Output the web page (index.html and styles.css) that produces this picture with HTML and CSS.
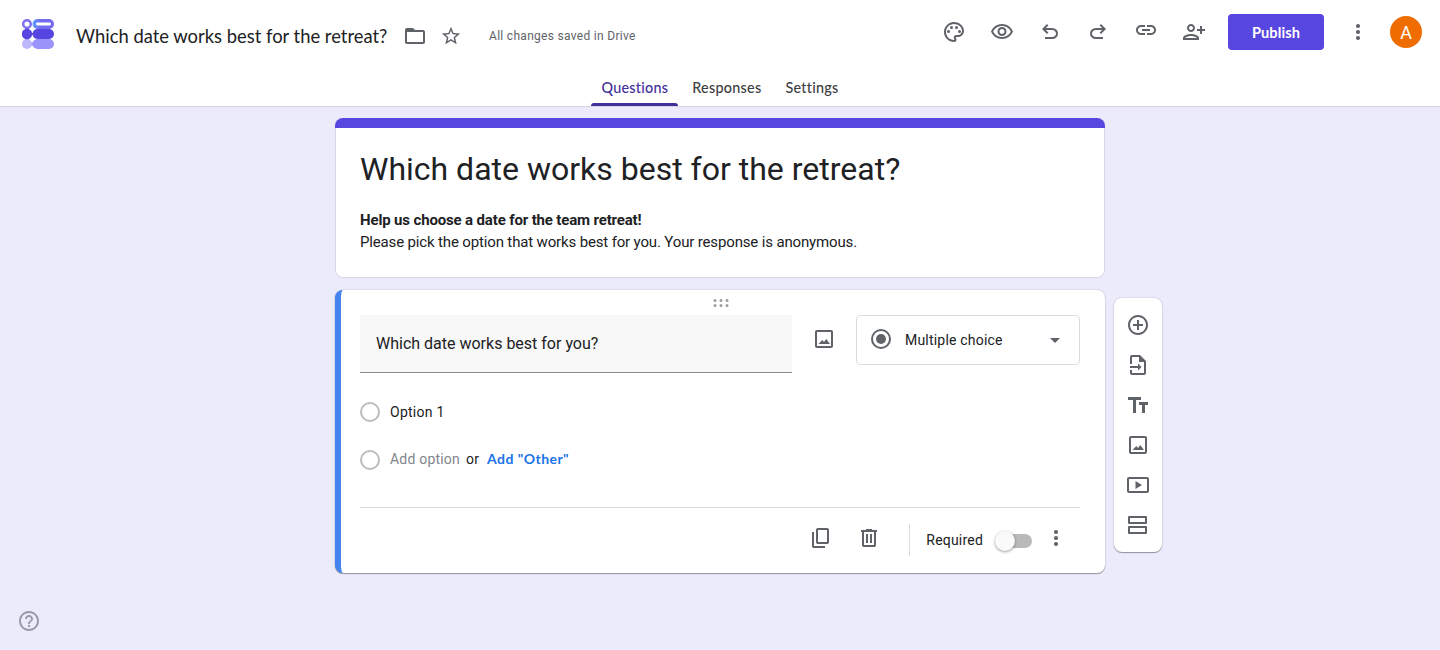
FILE: index.html
```html
<!DOCTYPE html>
<html lang="en">
<head>
    <meta charset="UTF-8">
    <meta name="viewport" content="width=device-width, initial-scale=1.0">
    <title>Which date works best for the retreat?</title>
    <link rel="stylesheet" href="styles.css">
</head>
<body>
    <header class="header">
        <div class="top-bar">
            <div class="top-left">
                <svg class="logo" width="32" height="30" viewBox="0 0 32 30">
                    <defs>
                        <linearGradient id="pill" x1="0" x2="1">
                            <stop offset="0" stop-color="#5ba4fa"/>
                            <stop offset=".35" stop-color="#756cf0"/>
                            <stop offset="1" stop-color="#7468ee"/>
                        </linearGradient>
                    </defs>
                    <path d="M3 9h4v12H3zM9 14h4v2H9z" fill="#6c5fe8"/>
                    <rect x="10.5" y="0" width="21.5" height="10" rx="5" fill="url(#pill)"/>
                    <rect x="14" y="3.6" width="15" height="2.8" rx="1.4" fill="#fff"/>
                    <circle cx="5" cy="5" r="3.8" fill="#fff" stroke="#7b70ee" stroke-width="2.5"/>
                    <path d="M8 23h5v4H8z" fill="#b5aefc"/>
                    <circle cx="5" cy="25" r="5" fill="#bcb6fd"/>
                    <rect x="10.5" y="20" width="21.5" height="10" rx="5" fill="#9a93fa"/>
                    <circle cx="5" cy="15" r="5.2" fill="#5645e0"/>
                    <rect x="10.5" y="10" width="21.5" height="10" rx="5" fill="#5645e0"/>
                </svg>
                <span class="doc-title">Which date works best for the retreat?</span>
                <svg class="icon folder" viewBox="0 0 24 24"><path d="M20 6h-8l-2-2H4c-1.100 0-2 .9-2 2v12c0 1.100.9 2 2 2h16c1.100 0 2-.9 2-2V8c0-1.100-.9-2-2-2zm0 12H4V8h16v10z"/></svg>
                <svg class="icon star" viewBox="0 0 24 24"><path d="M22 9.240l-7.190-.62L12 2 9.190 8.630 2 9.240l5.460 4.730L5.820 21 12 17.270 18.180 21l-1.630-7.030L22 9.240zM12 15.400l-3.760 2.270 1-4.280-3.320-2.880 4.380-.38L12 6.100l1.710 4.040 4.380.38-3.320 2.880 1 4.280L12 15.400z"/></svg>
                <span class="save-status">All changes saved in Drive</span>
            </div>
            <div class="top-right">
                <svg class="icon" viewBox="0 0 24 24"><path d="M12 22C6.490 22 2 17.510 2 12S6.490 2 12 2s10 4.040 10 9c0 3.310-2.690 6-6 6h-1.770c-.28 0-.5.22-.5.5 0 .12.05.23.13.33.41.47.64 1.060.64 1.670A2.500 2.500 0 0 1 12 22zm0-18c-4.410 0-8 3.590-8 8s3.590 8 8 8c.28 0 .5-.22.5-.5a.54.54 0 0 0-.14-.35c-.41-.46-.63-1.050-.63-1.650a2.500 2.500 0 0 1 2.500-2.500H16c2.210 0 4-1.790 4-4 0-3.860-3.590-7-8-7z"/><circle cx="6.500" cy="11.500" r="1.500"/><circle cx="9.500" cy="7.500" r="1.500"/><circle cx="14.500" cy="7.500" r="1.500"/><circle cx="17.500" cy="11.500" r="1.500"/></svg>
                <svg class="icon" viewBox="0 0 24 24"><path d="M12 6c3.790 0 7.170 2.130 8.820 5.500C19.170 14.870 15.790 17 12 17s-7.170-2.130-8.820-5.500C4.830 8.130 8.210 6 12 6m0-2C7 4 2.730 7.110 1 11.500 2.730 15.890 7 19 12 19s9.270-3.110 11-7.500C21.270 7.110 17 4 12 4zm0 5c1.380 0 2.500 1.120 2.500 2.500S13.380 14 12 14s-2.500-1.120-2.500-2.500S10.620 9 12 9m0-2c-2.480 0-4.500 2.020-4.500 4.500S9.520 16 12 16s4.500-2.020 4.500-4.500S14.480 7 12 7z"/></svg>
                <svg class="icon" viewBox="0 0 24 24"><path d="M7 19v-2h7.100q1.575 0 2.737-1Q18 15 18 13.500T16.837 11Q15.675 10 14.100 10H7.800l2.600 2.600L9 14 4 9l5-5 1.400 1.400L7.800 8h6.300q2.425 0 4.163 1.575Q20 11.150 20 13.500t-1.737 3.925Q16.525 19 14.100 19Z"/></svg>
                <svg class="icon" viewBox="0 0 24 24"><path d="M9.900 19q-2.425 0-4.162-1.575Q4 15.850 4 13.500t1.738-3.925Q7.475 8 9.900 8h6.300l-2.600-2.600L15 4l5 5-5 5-1.400-1.400 2.600-2.600H9.900q-1.575 0-2.737 1Q6 12 6 13.500T7.163 16Q8.325 17 9.900 17H17v2Z"/></svg>
                <svg class="icon" viewBox="0 2 24 24"><path d="M3.900 12c0-1.710 1.390-3.100 3.100-3.100h4V7H7c-2.760 0-5 2.240-5 5s2.240 5 5 5h4v-1.900H7c-1.710 0-3.100-1.390-3.100-3.100zM8 13h8v-2H8v2zm9-6h-4v1.900h4c1.710 0 3.100 1.390 3.100 3.100s-1.390 3.100-3.100 3.100h-4V17h4c2.760 0 5-2.240 5-5s-2.240-5-5-5z"/></svg>
                <svg class="icon" viewBox="0 0 24 24"><path d="M20 9V6h-2v3h-3v2h3v3h2v-3h3V9h-3zM9 12c2.210 0 4-1.790 4-4s-1.790-4-4-4-4 1.790-4 4 1.790 4 4 4zm0-6c1.100 0 2 .9 2 2s-.9 2-2 2-2-.9-2-2 .9-2 2-2zm0 8c-2.670 0-8 1.340-8 4v2h16v-2c0-2.660-5.330-4-8-4zm6 4H3v-.01C3.200 17.290 6.300 16 9 16s5.800 1.290 6 1.990V18z"/></svg>
                <button class="publish-btn">Publish</button>
                <svg class="icon more" viewBox="0 0 24 24"><circle cx="12" cy="6" r="2.100"/><circle cx="12" cy="12" r="2.100"/><circle cx="12" cy="18" r="2.100"/></svg>
                <div class="avatar">A</div>
            </div>
        </div>
        <nav class="tabs">
            <a class="tab active">Questions</a>
            <a class="tab">Responses</a>
            <a class="tab">Settings</a>
        </nav>
    </header>

    <main class="editor">
        <section class="card title-card">
            <h1>Which date works best for the retreat?</h1>
            <p class="lead">Help us choose a date for the team retreat!</p>
            <p class="desc">Please pick the option that works best for you. Your response is anonymous.</p>
        </section>

        <section class="card question-card">
            <div class="drag">
                <svg width="16" height="8" viewBox="0 0 16 8"><circle cx="2" cy="1.500" r="1.500"/><circle cx="8" cy="1.500" r="1.500"/><circle cx="14" cy="1.500" r="1.500"/><circle cx="2" cy="6.500" r="1.500"/><circle cx="8" cy="6.500" r="1.500"/><circle cx="14" cy="6.500" r="1.500"/></svg>
            </div>
            <div class="question-row">
                <div class="question-input">Which date works best for you?</div>
                <svg class="icon image-btn" viewBox="0 0 24 24"><path d="M19 5v14H5V5h14m0-2H5c-1.100 0-2 .9-2 2v14c0 1.100.9 2 2 2h14c1.100 0 2-.9 2-2V5c0-1.100-.9-2-2-2zM14.300 12l-2.300 3-1.700-2-3.800 4h11.500z"/></svg>
                <div class="type-select">
                    <svg class="icon" viewBox="0 0 24 24"><circle cx="12" cy="12" r="9" fill="none" stroke="#5f6368" stroke-width="2"/><circle cx="12" cy="12" r="5"/></svg>
                    <span>Multiple choice</span>
                    <i class="caret"></i>
                </div>
            </div>
            <div class="options">
                <div class="option"><i class="radio"></i><span>Option 1</span></div>
                <div class="option new-option"><i class="radio"></i><span class="add">Add option</span><span class="or">or</span><a class="other">Add "Other"</a></div>
            </div>
            <div class="question-footer">
                <svg class="icon copy" viewBox="0 0 24 24"><path d="M9 18q-.825 0-1.412-.587Q7 16.825 7 16V4q0-.825.588-1.413Q8.175 2 9 2h9q.825 0 1.413.587Q20 3.175 20 4v12q0 .825-.587 1.413Q18.825 18 18 18Zm0-2h9V4H9v12Zm-4 6q-.825 0-1.413-.587Q3 20.825 3 20V6h2v14h11v2Z"/></svg>
                <svg class="icon trash" viewBox="0 0 24 24"><path d="M7 21q-.825 0-1.412-.587Q5 19.825 5 19V6H4V4h5V3h6v1h5v2h-1v13q0 .825-.587 1.413Q17.825 21 17 21ZM17 6H7v13h10ZM9 17h2V8H9Zm4 0h2V8h-2Z"/></svg>
                <div class="divider"></div>
                <span class="required">Required</span>
                <div class="toggle"><div class="thumb"></div></div>
                <svg class="icon" viewBox="0 0 24 24"><circle cx="12" cy="6" r="2.100"/><circle cx="12" cy="12" r="2.100"/><circle cx="12" cy="18" r="2.100"/></svg>
            </div>
        </section>

        <aside class="side-tools">
            <svg class="icon" viewBox="0 0 24 24"><path d="M13 7h-2v4H7v2h4v4h2v-4h4v-2h-4V7zm-1-5C6.480 2 2 6.480 2 12s4.480 10 10 10 10-4.480 10-10S17.520 2 12 2zm0 18c-4.410 0-8-3.590-8-8s3.590-8 8-8 8 3.590 8 8-3.590 8-8 8z"/></svg>
            <svg class="icon" viewBox="0 0 24 24"><path d="M14 2H6c-1.100 0-2 .9-2 2v7h2V4h7v5h5v11H6v-3H4v3c0 1.100.9 2 2 2h12c1.100 0 2-.9 2-2V8l-6-6zM12 17.500l3.500-3.500-3.500-3.500V13H4v2h8z"/></svg>
            <svg class="icon" viewBox="0 0 24 24"><path d="M2 4v3h5v13h3V7h5V4H2zm20 5h-9v3h3v8h3v-8h3V9z"/></svg>
            <svg class="icon" viewBox="0 0 24 24"><path d="M19 5v14H5V5h14m0-2H5c-1.100 0-2 .9-2 2v14c0 1.100.9 2 2 2h14c1.100 0 2-.9 2-2V5c0-1.100-.9-2-2-2zM14.300 12l-2.300 3-1.700-2-3.800 4h11.500z"/></svg>
            <svg class="icon" viewBox="0 0 24 24"><path d="M9.500 8v8l6.500-4zM21 4H3c-1.100 0-2 .9-2 2v12c0 1.100.9 2 2 2h18c1.100 0 2-.9 2-2V6c0-1.100-.9-2-2-2zm0 14H3V6h18v12z"/></svg>
            <svg class="icon" viewBox="0 0 24 24"><path d="M3 13a1 1 0 0 0-1 1v6a1 1 0 0 0 1 1h17a1 1 0 0 0 1-1v-6a1 1 0 0 0-1-1zm16 6H4v-4h15zM3 3a1 1 0 0 0-1 1v6a1 1 0 0 0 1 1h17a1 1 0 0 0 1-1V4a1 1 0 0 0-1-1zm16 6H4V5h15z"/></svg>
        </aside>
    </main>

    <svg class="help" viewBox="0 0 24 24"><path d="M11 18h2v-2h-2v2zm1-16C6.480 2 2 6.480 2 12s4.480 10 10 10 10-4.480 10-10S17.520 2 12 2zm0 18c-4.410 0-8-3.590-8-8s3.590-8 8-8 8 3.590 8 8-3.590 8-8 8zm0-14c-2.210 0-4 1.790-4 4h2c0-1.100.9-2 2-2s2 .9 2 2c0 2-3 1.750-3 5h2c0-2.250 3-2.500 3-5 0-2.210-1.790-4-4-4z"/></svg>
</body>
</html>
```

FILE: styles.css
```css
* {
    margin: 0;
    padding: 0;
    box-sizing: border-box;
}

body {
    font-family: Roboto, 'Liberation Sans', sans-serif;
    background: #ecebfc;
    color: #202124;
    height: 100vh;
    overflow: hidden;
}

.icon {
    width: 24px;
    height: 24px;
    fill: #5f6368;
    flex-shrink: 0;
}

/* header */
.header {
    height: 107px;
    background: #fff;
    border-bottom: 1px solid #d6d4e2;
}

.top-bar {
    display: flex;
    justify-content: space-between;
    height: 72px;
    padding: 0 18px 0 22px;
}

.top-left {
    display: flex;
    align-items: center;
    height: 72px;
}

.logo {
    margin-bottom: 4px;
}

.doc-title {
    width: 311px;
    margin-left: 22px;
    font-family: Lato, sans-serif;
    font-size: 18.4px;
    white-space: nowrap;
}

.folder {
    margin-left: 16px;
}

.star {
    width: 22px;
    height: 22px;
    margin-left: 13px;
}

.save-status {
    margin-left: 27px;
    font-size: 12px;
    letter-spacing: 0.3px;
    color: #5f6368;
}

.top-right {
    display: flex;
    align-items: center;
    gap: 24px;
    height: 64px;
}

.publish-btn {
    width: 96px;
    height: 36px;
    margin: 0 -2px;
    background: #5746e0;
    color: #fff;
    border: none;
    border-radius: 4px;
    font-family: Lato, sans-serif;
    font-size: 14.6px;
    font-weight: bold;
    letter-spacing: 0.1px;
}

.avatar {
    width: 32px;
    height: 32px;
    margin-left: -4px;
    background: #ef6c00;
    color: #fff;
    border-radius: 50%;
    font-size: 18px;
    line-height: 34px;
    text-align: center;
}

.tabs {
    display: flex;
    justify-content: center;
    gap: 4px;
    height: 34px;
}

.tab {
    padding: 6px 10px 0;
    font-family: Lato, sans-serif;
    font-size: 14.4px;
    font-weight: 500;
    line-height: 20px;
    letter-spacing: 0.25px;
    color: #3c4043;
    white-space: nowrap;
}

.tab.active {
    color: #42309a;
    position: relative;
}

.tab.active::after {
    content: "";
    position: absolute;
    left: 0;
    right: 0;
    bottom: 0;
    height: 3px;
    background: #42309a;
    border-radius: 3px 3px 0 0;
}

/* form */
.editor {
    display: grid;
    grid-template-columns: 1fr 770px 1fr;
    grid-template-rows: 160px 283px;
    gap: 12px 9px;
    padding-top: 11px;
}

.card {
    grid-column: 2;
    background: #fff;
    border-radius: 8px;
}

/* inset shadow as outline, so the colour band covers the full width */
.title-card {
    box-shadow: inset 0 0 0 1px #d8d6e4;
    overflow: hidden;
    padding: 0 25px;
}

.title-card::before {
    content: "";
    display: block;
    height: 10px;
    margin: 0 -25px 21px;
    background: #5746e0;
}

.title-card h1 {
    font-size: 32px;
    font-weight: 400;
    line-height: 40px;
    white-space: nowrap;
}

.lead, .desc {
    font-size: 15px;
    line-height: 22px;
    letter-spacing: -0.15px;
}

.lead {
    margin-top: 20px;
    font-weight: bold;
}

.question-card {
    border-left: 6px solid #4583f0;
    padding: 0 25px 0 19px;
    box-shadow: 0 1px 1px rgba(0, 0, 0, 0.35), 0 0 2px rgba(0, 0, 0, 0.2);
}

.drag {
    display: flex;
    justify-content: center;
    height: 25px;
    padding: 9px 0 0 1px;
    fill: #9a9da1;
}

.question-row {
    display: flex;
    height: 58px;
}

.question-input {
    width: 432px;
    padding: 0 16px;
    background: #f8f8f8;
    border-bottom: 1px solid #868a8f;
    font-size: 16px;
    line-height: 57px;
}

.image-btn {
    margin: 12px 20px 0;
}

.type-select {
    display: flex;
    align-items: center;
    width: 224px;
    height: 50px;
    padding: 0 19px 0 12px;
    border: 1px solid #dadce0;
    border-radius: 4px;
    font-size: 14px;
    letter-spacing: 0.2px;
}

.type-select span {
    flex: 1;
    margin-left: 12px;
}

.type-select .icon {
    margin-bottom: 2px;
}

.caret {
    border: 5px solid transparent;
    border-top-color: #5f6368;
    border-bottom: none;
}

.options {
    padding-top: 15px;
    height: 135px;
    border-bottom: 1px solid #dadce0;
}

.option {
    display: flex;
    align-items: center;
    height: 48px;
    font-size: 14px;
    letter-spacing: 0.25px;
}

.radio {
    width: 20px;
    height: 20px;
    margin-right: 10px;
    border: 2px solid #bdbdbd;
    border-radius: 50%;
}

.new-option {
    letter-spacing: 0.2px;
}

.new-option span {
    margin-bottom: 2px;
}

.add {
    color: #80868b;
}

.option .or {
    margin: 0 8px 2px 6px;
}

.other {
    margin-bottom: 3px;
    font-family: Lato, sans-serif;
    font-weight: bold;
    letter-spacing: 0.45px;
    color: #1a73e8;
}

.question-footer {
    display: flex;
    justify-content: flex-end;
    align-items: center;
    height: 64px;
    padding-right: 12px;
    font-size: 14px;
    letter-spacing: 0.2px;
}

.question-footer .icon {
    margin-bottom: 4px;
}

.trash {
    margin-left: 24px;
}

.divider {
    width: 1px;
    height: 32px;
    margin: 0 16px 0 28px;
    background: #dadce0;
}

.toggle {
    width: 37px;
    height: 14px;
    margin: 2px 12px 0 12px;
    background: linear-gradient(#b9b9b9, #b9b9b9) right / 32px 14px no-repeat;
    border-radius: 7px;
}

.thumb {
    width: 20px;
    height: 20px;
    margin-top: -3px;
    background: #fafafa;
    border-radius: 50%;
    box-shadow: 0 1px 3px rgba(0, 0, 0, 0.4);
}

.side-tools {
    grid-column: 3;
    grid-row: 2;
    display: flex;
    flex-direction: column;
    align-items: center;
    gap: 16px;
    width: 48px;
    height: 254px;
    margin-top: 8px;
    padding-top: 15px;
    background: #fff;
    border-radius: 8px;
    box-shadow: 0 1px 1px rgba(0, 0, 0, 0.35), 0 0 2px rgba(0, 0, 0, 0.2);
}

/* help button stays in the corner over the page */
.help {
    position: fixed;
    left: 17px;
    bottom: 17px;
    width: 24px;
    height: 24px;
    fill: #9b9aa8;
}
```
